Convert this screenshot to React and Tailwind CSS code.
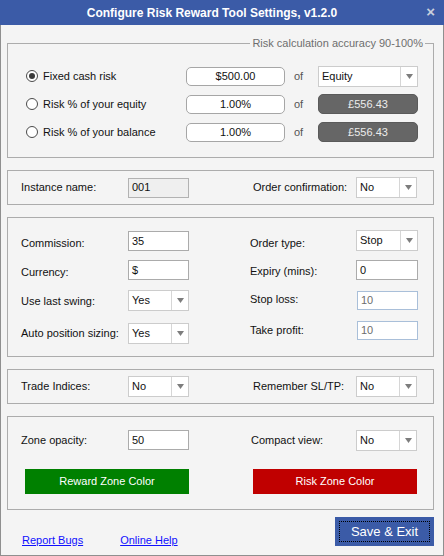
import React from "react";

const Arrow = () => (
  <svg width="7" height="5" viewBox="0 0 7 5">
    <path d="M0 0 H7 L3.5 5 Z" fill="#7d7d7d" />
  </svg>
);

const Select = ({ value, className = "" }) => (
  <div className={`flex h-[21px] border border-[#cccccc] bg-white ${className}`}>
    <div className="flex-1 flex items-center pl-[3px] text-[#111]">{value}</div>
    <div className="w-[17px] border-l border-[#d6d6d6] flex items-center justify-center">
      <Arrow />
    </div>
  </div>
);

const TextBox = ({ value, className = "" }) => (
  <div className={`flex items-center border border-[#ababab] bg-white pl-[3px] text-[#111] ${className}`}>
    {value}
  </div>
);

const Radio = ({ checked }) => (
  <div className="w-[12px] h-[12px] rounded-full border border-[#4a4a4a] bg-white flex items-center justify-center shrink-0">
    {checked && <div className="w-[6px] h-[6px] rounded-full bg-[#3a3a3a]" />}
  </div>
);

const RiskRow = ({ label, checked, value, right }) => (
  <div className="flex items-center h-[20px]">
    <div className="w-[160px] flex items-center gap-[5px]">
      <Radio checked={checked} />
      <span>{label}</span>
    </div>
    <div className="w-[99px] h-[19px] rounded-[5px] border border-[#a6a6a6] bg-white flex items-center justify-center">
      {value}
    </div>
    <span className="w-[33px] pl-[9px] text-[#555]">of</span>
    {right}
  </div>
);

const DarkBox = ({ value }) => (
  <div className="w-[100px] h-[20px] rounded-[5px] border border-[#5a5a5a] bg-[#666666] text-[#ececec] flex items-center justify-center">
    {value}
  </div>
);

export default function App() {
  return (
    <div className="w-[444px] h-[556px] flex flex-col font-['Liberation_Sans',Arial,sans-serif] text-[11px] text-[#111]">
      <div className="h-[25px] shrink-0 bg-[#3b5ba7] flex items-center relative">
        <div className="flex-1 text-center text-white font-bold text-[12px] pr-[20px]">
          Configure Risk Reward Tool Settings, v1.2.0
        </div>
        <span className="absolute right-[9px] top-[4px] text-[#c9cfdc] font-bold text-[15px] leading-[16px]">×</span>
      </div>

      <div className="flex-1 bg-[#f4f4f4] border-x border-b border-[#8f8f8f] pl-[6px] pr-[9px] pt-[18px] flex flex-col">
        <div className="flex flex-col gap-[12px]">
          {/* risk group */}
          <div className="relative h-[115px] border border-[#acacac] pt-[22px] pl-[18px] flex flex-col gap-[8px]">
            <span className="absolute right-[8px] top-[-7px] px-[2px] bg-[#f4f4f4] text-[#6e6e6e] leading-[13px]">
              Risk calculation accuracy 90-100%
            </span>
            <RiskRow label="Fixed cash risk" checked value="$500.00" right={<Select value="Equity" className="w-[100px]" />} />
            <RiskRow label="Risk % of your equity" value="1.00%" right={<DarkBox value="£556.43" />} />
            <RiskRow label="Risk % of your balance" value="1.00%" right={<DarkBox value="£556.43" />} />
          </div>

          {/* instance group */}
          <div className="h-[35px] border border-[#acacac] pl-[13px] flex items-center">
            <span className="w-[107px]">Instance name:</span>
            <div className="w-[61px] h-[20px] border border-[#b2b2b2] bg-[#efefef] flex items-center pl-[3px]">001</div>
            <span className="ml-[64px] w-[103px]">Order confirmation:</span>
            <Select value="No" className="w-[61px]" />
          </div>

          {/* order group */}
          <div className="h-[140px] border border-[#acacac] flex">
            <div className="pl-[13px] pt-[13px] flex flex-col">
              <div className="flex items-center h-[20px]">
                <span className="w-[107px] pt-[4px]">Commission:</span>
                <TextBox value="35" className="w-[61px] h-[20px]" />
              </div>
              <div className="flex items-center h-[20px] mt-[9px]">
                <span className="w-[107px] pt-[4px]">Currency:</span>
                <TextBox value="$" className="w-[61px] h-[20px]" />
              </div>
              <div className="flex items-center h-[21px] mt-[10px]">
                <span className="w-[107px] pt-[2px]">Use last swing:</span>
                <Select value="Yes" className="w-[61px]" />
              </div>
              <div className="flex items-center h-[20px] mt-[12px]">
                <span className="w-[107px]">Auto position sizing:</span>
                <Select value="Yes" className="w-[61px]" />
              </div>
            </div>
            <div className="ml-[61px] pt-[12px] flex flex-col">
              <div className="flex items-center h-[21px]">
                <span className="w-[106px] pt-[6px]">Order type:</span>
                <Select value="Stop" className="w-[62px]" />
              </div>
              <div className="flex items-center h-[20px] mt-[9px]">
                <span className="w-[106px] pt-[3px]">Expiry (mins):</span>
                <TextBox value="0" className="w-[62px] h-[20px]" />
              </div>
              <div className="flex items-center h-[19px] mt-[11px]">
                <span className="w-[107px] pb-[3px]">Stop loss:</span>
                <div className="w-[61px] h-[19px] border border-[#a9bfd9] bg-white flex items-center pl-[3px] text-[#6d6d6d]">10</div>
              </div>
              <div className="flex items-center h-[19px] mt-[11px]">
                <span className="w-[107px]">Take profit:</span>
                <div className="w-[61px] h-[19px] border border-[#a9bfd9] bg-white flex items-center pl-[3px] text-[#6d6d6d]">10</div>
              </div>
            </div>
          </div>

          {/* indices group */}
          <div className="h-[35px] border border-[#acacac] pl-[13px] flex items-center">
            <span className="w-[107px]">Trade Indices:</span>
            <Select value="No" className="w-[61px]" />
            <span className="ml-[64px] w-[103px]">Remember SL/TP:</span>
            <Select value="No" className="w-[61px]" />
          </div>

          {/* zone group */}
          <div className="h-[94px] border border-[#acacac] pt-[13px] flex flex-col">
            <div className="flex items-center h-[20px] pl-[13px]">
              <span className="w-[107px]">Zone opacity:</span>
              <TextBox value="50" className="w-[61px] h-[20px]" />
              <span className="ml-[62px] w-[105px]">Compact view:</span>
              <Select value="No" className="w-[61px]" />
            </div>
            <div className="flex mt-[19px] pl-[17px] gap-[64px]">
              <div className="w-[164px] h-[25px] bg-[#008000] text-white flex items-center justify-center">
                Reward Zone Color
              </div>
              <div className="w-[164px] h-[25px] bg-[#c00000] text-white flex items-center justify-center">
                Risk Zone Color
              </div>
            </div>
          </div>
        </div>

        <div className="flex mt-[7px]">
          <div className="flex gap-[37px] pl-[15px] mt-[15px]">
            <a className="text-[#1010ff] underline">Report Bugs</a>
            <a className="text-[#1010ff] underline">Online Help</a>
          </div>
          <div className="ml-auto w-[99px] h-[29px] bg-[#3b5ba7] p-[4px]">
            <div className="h-full border border-dotted border-black flex items-center justify-center text-white text-[13px]">
              Save &amp; Exit
            </div>
          </div>
        </div>
      </div>
    </div>
  );
}
